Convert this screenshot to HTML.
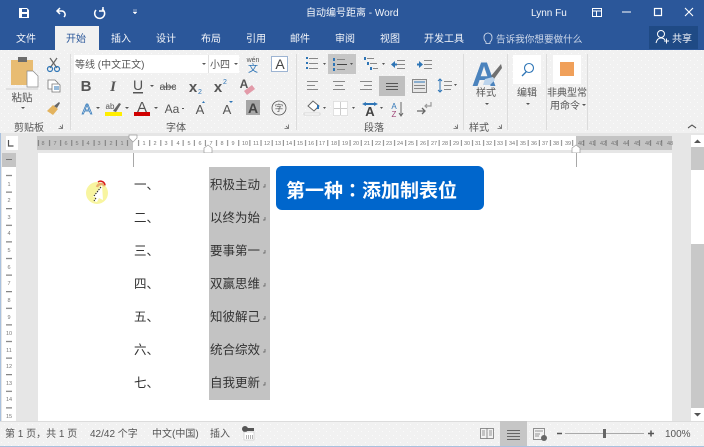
<!DOCTYPE html>
<html><head><meta charset="utf-8">
<style>
html,body{margin:0;padding:0;background:#fff;width:704px;height:447px;overflow:hidden}
svg{display:block;font-family:"Liberation Sans","Noto Sans CJK SC",sans-serif}
.t{fill:#555;font-size:10px}
.w{fill:#f4f6fa;font-size:10px}
.d{fill:#333;font-size:12.5px}
.r text{font-size:5.5px;fill:#777;text-anchor:middle}
.ar{fill:#555}
</style></head><body>
<svg width="704" height="447" viewBox="0 0 704 447" xmlns="http://www.w3.org/2000/svg">
<defs>
<pattern id="dots" width="7" height="7" patternUnits="userSpaceOnUse"><rect x="1" y="1" width="1" height="1" fill="#fbfbfb"/><rect x="4" y="4" width="1" height="1" fill="#fbfbfb"/></pattern>
<pattern id="tk" x="0" width="11.13" height="14" patternUnits="userSpaceOnUse" patternTransform="translate(133 136)"><rect x="5.200" y="4" width=".8" height="6" fill="#666"/></pattern>
<pattern id="tv" width="14" height="16.6" patternUnits="userSpaceOnUse" patternTransform="translate(2 167)"><rect x="4" y="8" width="6" height="1" fill="#666"/></pattern>
</defs>
<!-- base -->
<rect width="704" height="447" fill="#e6e6e6"/>
<rect width="704" height="50" fill="#2b579a"/>
<rect y="50" width="704" height="83" fill="#f1f1f1"/>
<rect y="50" width="704" height="83" fill="url(#dots)"/>
<rect x="55" y="26" width="44" height="24" fill="#f1f1f1"/>
<rect x="0" y="133" width="1" height="314" fill="#a9c1de"/>
<!-- title bar icons -->
<path d="M19 8h8l2 2v8H19zM22 9v3h5V9zM22 14v3h5v-3z" fill="#fff" fill-rule="evenodd"/>
<g fill="none" stroke="#fff" stroke-width="1.500"><path d="M60 8l-3 3 3 3M57 11h5a3.500 3.500 0 0 1 2 6"/><path d="M102 9a5 5 0 1 1-6 1M103 7v4h-4"/></g>
<path d="M133 10h4M133 12h4l-2 2z" stroke="#fff" stroke-width=".5" fill="#fff"/>
<text x="306" y="16" class="w">自动编号距离 - Word</text>
<text x="531" y="16" class="w">Lynn Fu</text>
<g fill="none" stroke="#fff"><rect x="592.500" y="8.500" width="9" height="8"/><path d="M592 11h10M596.500 11v5"/><path d="M622 12h9"/><rect x="654.500" y="8.500" width="7" height="7" stroke-width="1.200"/><path d="M685 8l8 8M693 8l-8 8" stroke-width="1.100"/></g>
<!-- tabs -->
<g text-anchor="middle">
<text x="26" y="42" class="w">文件</text>
<text x="76" y="42" style="fill:#2b579a;font-size:10px">开始</text>
<text x="121" y="42" class="w">插入</text>
<text x="166" y="42" class="w">设计</text>
<text x="211" y="42" class="w">布局</text>
<text x="256" y="42" class="w">引用</text>
<text x="300" y="42" class="w">邮件</text>
<text x="345" y="42" class="w">审阅</text>
<text x="390" y="42" class="w">视图</text>
<text x="444" y="42" class="w">开发工具</text>
</g>
<path d="M486 42c-2-2-2-3-2-5a4 4 0 0 1 8 0c0 2 0 3-2 5v1.500h-4z" fill="none" stroke="#dfe6f2" stroke-width=".8"/>
<text x="496" y="42.500" style="fill:#cfd9ea;font-size:9.600px">告诉我你想要做什么</text>
<rect x="649" y="26" width="49" height="23" fill="#1f4a85"/>
<circle cx="661" cy="34" r="3.500" fill="none" stroke="#fff"/><path d="M656 43c1-4 3-5 5-5s3 .5 4 2M664 41h5M666.500 38.500v5" fill="none" stroke="#fff"/>
<text x="672" y="42" class="w">共享</text>
<!-- clipboard -->
<rect x="11" y="60" width="22" height="25" fill="#e8bc72"/>
<rect x="18" y="57" width="9" height="5" fill="#6c6c6c"/>
<path d="M27 71h6l5 5v11H27z" fill="#fff" stroke="#888" stroke-width=".7"/>
<path d="M6 89h32" stroke="#cfcfcf"/>
<text x="22" y="101" class="t" text-anchor="middle" style="font-size:10.500px">粘贴</text>
<path d="M21 107h4l-2 2z" class="ar"/>
<text x="29" y="131" class="t" text-anchor="middle">剪贴板</text>
<g fill="none" stroke="#666" stroke-width=".8"><path d="M58.500 128.500h4v-4M60 126l2 2"/><path d="M284.500 128.500h4v-4M286 126l2 2"/><path d="M453.500 128.500h4v-4M455 126l2 2"/><path d="M497.500 128.500h4v-4M499 126l2 2"/></g>
<!-- cut/copy/brush -->
<g fill="none" stroke-width="1.200"><path d="M50 58l7 10M57 58l-7 10" stroke="#666"/><circle cx="50" cy="69" r="2.500" stroke="#2e75b6"/><circle cx="57" cy="69" r="2.500" stroke="#2e75b6"/></g>
<g fill="#fff" stroke="#777" stroke-width=".8"><path d="M48 80h7l3 3v6h-10z"/><path d="M52 84h7l1 1v7h-8z"/></g><path d="M54 87h5M54 89h5" stroke="#2e75b6"/>
<path d="M47 111l6-6 5 4-5 6z" fill="#e3b35e"/><path d="M54 106l5-4 1 1-3 5z" fill="#666"/>
<g stroke="#dcdcdc"><path d="M70.500 54v76M296.500 54v76M463.500 54v76"/><path d="M507.500 54v76M546.500 54v76M587.500 54v76"/></g>
<!-- font box -->
<rect x="74" y="55" width="165" height="18" fill="#fff"/><path d="M208.500 55v18" stroke="#e0e0e0"/>
<text x="75" y="68" class="t">等线 (中文正文)</text>
<text x="210" y="68" class="t">小四</text>
<path d="M202 63h4l-2 2zM234 63h4l-2 2z" class="ar"/>
<text x="253" y="62" text-anchor="middle" style="font-size:7px;fill:#555">wén</text>
<text x="253" y="72" text-anchor="middle" style="font-size:10px;fill:#2e75b6">文</text>
<rect x="271.500" y="56.500" width="16" height="15" fill="#fff" stroke="#9db4d2"/>
<text x="280" y="69" text-anchor="middle" style="font-size:14px;fill:#444">A</text>
<!-- font row 2 -->
<g fill="#555">
<text x="86" y="91" text-anchor="middle" style="font-size:15px;font-weight:bold">B</text>
<text x="113" y="91" text-anchor="middle" style="font-size:15px;font-style:italic;font-weight:bold;font-family:'Liberation Serif',serif">I</text>
<text x="138" y="90" text-anchor="middle" style="font-size:14px">U</text>
<rect x="133" y="92" width="10" height="1.500"/>
<path d="M150 85h4l-2 2z"/>
<text x="168" y="90" text-anchor="middle" style="font-size:10.500px">abc</text><rect x="160" y="86.500" width="16" height="1"/>
<text x="193" y="92" text-anchor="middle" style="font-size:15px;font-weight:bold">x</text><text x="200" y="94" style="font-size:7px;fill:#2e75b6" text-anchor="middle">2</text>
<text x="218" y="92" text-anchor="middle" style="font-size:15px;font-weight:bold">x</text><text x="225" y="84" style="font-size:7px;fill:#2e75b6" text-anchor="middle">2</text>
<text x="244" y="88" text-anchor="middle" style="font-size:12px;font-weight:bold">A</text>
</g>
<path d="M244 91l8-6 3 4-8 6z" fill="#e29aa8"/>
<!-- font row 3 -->
<text x="87" y="114" text-anchor="middle" style="font-size:15px;fill:#dbe8f6;stroke:#2e75b6;stroke-width:.7">A</text>
<path d="M96 107h4l-2 2zM125 107h4l-2 2zM154 107h4l-2 2z" class="ar"/>
<text x="110" y="109" text-anchor="middle" style="font-size:8px;fill:#555">ab</text>
<path d="M113 111l6-8 2 1-5 8z" fill="#666"/>
<rect x="105" y="112" width="17" height="4" fill="#ffee00"/>
<text x="142" y="112" text-anchor="middle" style="font-size:15px;fill:#555">A</text>
<rect x="134" y="112" width="16" height="4" fill="#d00000"/>
<text x="172" y="113" text-anchor="middle" style="font-size:12px;fill:#555">Aa</text><path d="M182 108h2v1h-2z" class="ar"/>
<text x="200" y="114" text-anchor="middle" style="font-size:13px;fill:#555">A</text><path d="M202 103h3l-1.500-2z" fill="#2e75b6"/>
<text x="227" y="114" text-anchor="middle" style="font-size:13px;fill:#555">A</text><path d="M229 101h4l-2 2z" fill="#2e75b6"/>
<rect x="246" y="100" width="14" height="15" fill="#a6a6a6"/>
<text x="253" y="113" text-anchor="middle" style="font-size:14px;fill:#444;font-weight:bold">A</text>
<circle cx="279" cy="108" r="7" fill="none" stroke="#555" stroke-width=".8"/>
<text x="279" y="111" text-anchor="middle" style="font-size:8.500px;fill:#555">字</text>
<text x="176" y="131" text-anchor="middle" class="t">字体</text>
<!-- paragraph -->
<rect x="328" y="54" width="28" height="20" fill="#c6c6c6"/>
<g stroke="#888" fill="none">
<path d="M309 58.500h9M309 63.500h9M309 68.500h9"/>
<path d="M337 64.500h10" stroke="#444"/><path d="M337 59.500h8M337 69.500h8"/>
<path d="M367 58.500h7M370 63.500h7M373 68.500h5"/>
<path d="M397 60.500h8M397 64.500h8M397 68.500h8"/>
<path d="M424 60.500h8M424 64.500h8M424 68.500h8"/>
<path d="M307 81.500h11M307 85.500h8M307 89.500h11"/><path d="M333 81.500h12M335 85.500h8M333 89.500h12"/><path d="M360 81.500h12M364 85.500h8M360 89.500h12"/>
</g>
<g fill="#2e75b6"><rect x="306" y="57" width="2" height="2"/><rect x="306" y="62" width="2" height="2"/><rect x="306" y="67" width="2" height="2"/><rect x="333" y="58" width="2" height="3"/><rect x="333" y="63" width="2" height="3"/><rect x="333" y="68" width="2" height="3"/><rect x="364" y="57" width="2" height="3"/><rect x="367" y="62" width="2" height="3"/><rect x="370" y="67" width="2" height="3"/>
<path d="M391 64.500l4-3.500v2.500h2v2h-2v2.500z"/><path d="M423 64.500l-4-3.500v2.500h-2v2h2v2.500z"/></g>
<path d="M382 63h3l-1.500 2z" class="ar"/>
<path d="M323 63h3l-1.500 2zM350 63h3l-1.500 2z" class="ar"/>
<rect x="379" y="76" width="26" height="20" fill="#bfbfbf"/>
<path d="M386 83.500h12M386 86.500h12M386 89.500h12" stroke="#555"/>
<rect x="412.500" y="79.500" width="14" height="13" fill="#e6e6e6" stroke="#888"/><path d="M414 85.500h11M414 88.500h11" stroke="#888"/><path d="M414 82h11" stroke="#2e75b6"/>
<path d="M440 79v13M438 81l2-2 2 2M438 90l2 2 2-2" stroke="#2e75b6" fill="none"/><path d="M444 81.500h8M444 85.500h8M444 89.500h7" stroke="#888"/><path d="M454 84h3l-1.500 2z" class="ar"/>
<path d="M308 106l5-5 6 5-5 5z" fill="#fff" stroke="#666"/><rect x="304" y="113" width="16" height="2" fill="#fff" stroke="#bbb" stroke-width=".5"/><rect x="317" y="105" width="2" height="4" fill="#2e75b6"/><path d="M323 107h3l-1.500 2z" class="ar"/>
<rect x="333.500" y="101.500" width="14" height="14" fill="#fff" stroke="#ccc" stroke-dasharray="1 1"/><path d="M340.500 102v13M334 108.500h13" stroke="#ccc"/><path d="M352 107h3l-1.500 2z" class="ar"/>
<text x="370" y="116" text-anchor="middle" style="font-size:13px;font-weight:bold;fill:#444">A</text><path d="M362 104l4-2v1h8v-1l4 2-4 2v-1h-8v1z" fill="#2e75b6"/><path d="M380 107h3l-1.500 2z" class="ar"/>
<text x="394" y="109" text-anchor="middle" style="font-size:8px;fill:#2e75b6">A</text><text x="394" y="117" text-anchor="middle" style="font-size:8px;fill:#a04a7a">Z</text><path d="M401 102v14M399 113l2 3 2-3" stroke="#666" fill="none"/>
<path d="M417 111h8M422 108l3 3-3 3" stroke="#666" fill="none" stroke-width="1.300"/><path d="M431 102v4h-6M427 104l-2 2 2 2" stroke="#999" fill="none" stroke-width="1.200"/>
<text x="374" y="131" text-anchor="middle" class="t">段落</text>
<!-- styles -->
<text x="484" y="86" text-anchor="middle" style="font-size:34px;font-weight:bold;fill:#4b83bd">A</text>
<path d="M491 76l10-12 1 4-8 11z" fill="#707070"/><path d="M485 79l8-2 2 3-5 5-7 0z" fill="#bcd4ec"/>
<text x="486" y="96" text-anchor="middle" class="t">样式</text>
<path d="M485 103h4l-2 2zM526 103h4l-2 2z" class="ar"/>
<text x="479" y="131" text-anchor="middle" class="t">样式</text>
<rect x="513" y="55" width="28" height="29" fill="#fff"/>
<circle cx="529" cy="68" r="4.500" fill="none" stroke="#2e75b6" stroke-width="1.100"/><path d="M526 72l-4 4" stroke="#2e75b6" stroke-width="1.300"/>
<text x="527" y="96" text-anchor="middle" class="t">编辑</text>
<rect x="553" y="55" width="28" height="29" fill="#fff"/>
<rect x="560" y="62" width="14" height="14" fill="#f0a05a"/>
<text x="567" y="96" text-anchor="middle" class="t">非典型常</text>
<text x="565" y="109" text-anchor="middle" class="t">用命令</text>
<path d="M582 104h4l-2 2z" class="ar"/>
<path d="M688 128l4-3 4 3" fill="none" stroke="#555" stroke-width="1.100"/>
<!-- ruler -->
<rect x="1" y="133" width="703" height="3" fill="#e6e6e6"/>
<rect x="37" y="136" width="96" height="14" fill="#c4c4c4"/>
<rect x="133" y="136" width="443" height="14" fill="#fff"/>
<rect x="576" y="136" width="96" height="14" fill="#c4c4c4"/>
<rect x="37" y="136" width="635" height="14" fill="url(#tk)"/>
<g class="r">
<text x="43" y="145">8</text><text x="55" y="145">7</text><text x="66" y="145">6</text><text x="77" y="145">5</text><text x="88" y="145">4</text><text x="99" y="145">3</text><text x="111" y="145">2</text><text x="122" y="145">1</text>
<text x="144" y="145">1</text><text x="155" y="145">2</text><text x="166" y="145">3</text><text x="178" y="145">4</text><text x="189" y="145">5</text><text x="200" y="145">6</text><text x="211" y="145">7</text><text x="222" y="145">8</text><text x="233" y="145">9</text><text x="245" y="145">10</text>
<text x="256" y="145">11</text><text x="267" y="145">12</text><text x="278" y="145">13</text><text x="289" y="145">14</text><text x="300" y="145">15</text><text x="311" y="145">16</text><text x="322" y="145">17</text><text x="334" y="145">18</text><text x="345" y="145">19</text><text x="356" y="145">20</text>
<text x="367" y="145">21</text><text x="378" y="145">22</text><text x="389" y="145">23</text><text x="400" y="145">24</text><text x="411" y="145">25</text><text x="423" y="145">26</text><text x="434" y="145">27</text><text x="445" y="145">28</text><text x="456" y="145">29</text><text x="467" y="145">30</text>
<text x="478" y="145">31</text><text x="489" y="145">32</text><text x="500" y="145">33</text><text x="512" y="145">34</text><text x="523" y="145">35</text><text x="534" y="145">36</text><text x="545" y="145">37</text><text x="556" y="145">38</text><text x="568" y="145">39</text>
<text x="581" y="145">40</text><text x="592" y="145">41</text><text x="603" y="145">42</text><text x="614" y="145">43</text><text x="626" y="145">44</text><text x="637" y="145">45</text><text x="648" y="145">46</text><text x="659" y="145">47</text><text x="670" y="145">48</text>
</g>
<path d="M129 135h8v3l-4 4-4-4z" fill="#fff" stroke="#999" stroke-width=".7"/>
<path d="M204 151v-3l4-3 4 3v5h-8z" fill="#fff" stroke="#999" stroke-width=".7"/>
<path d="M572 151v-3l4-3 4 3v5h-8z" fill="#fff" stroke="#999" stroke-width=".7"/>
<rect x="6" y="136" width="12" height="14" fill="#fff"/>
<path d="M8.500 140v6h5" fill="none" stroke="#555" stroke-width="1.200"/>
<!-- left ruler -->
<rect x="2" y="153" width="14" height="268" fill="#fff"/>
<rect x="2" y="153" width="14" height="14" fill="#c4c4c4"/>
<rect x="6" y="159" width="6" height="1" fill="#777"/>
<rect x="2" y="167" width="14" height="254" fill="url(#tv)"/>
<g style="font-size:5.500px;fill:#777" text-anchor="middle">
<text x="9" y="186">1</text><text x="9" y="202">2</text><text x="9" y="219">3</text><text x="9" y="235">4</text><text x="9" y="252">5</text><text x="9" y="269">6</text><text x="9" y="285">7</text><text x="9" y="302">8</text><text x="9" y="319">9</text><text x="9" y="335">10</text><text x="9" y="352">11</text><text x="9" y="368">12</text><text x="9" y="385">13</text><text x="9" y="401">14</text><text x="9" y="418">15</text>
</g>
<!-- page -->
<rect x="38" y="153" width="634" height="268" fill="#fff"/>
<path d="M133.500 153v14M576.500 153v14" stroke="#a8a8a8"/>
<rect x="209" y="167" width="61" height="233" fill="#c3c3c3"/>
<g>
<text x="134" y="189" class="d">一、</text><text x="210" y="189" class="d">积极主动</text>
<text x="134" y="222" class="d">二、</text><text x="210" y="222" class="d">以终为始</text>
<text x="134" y="255" class="d">三、</text><text x="210" y="255" class="d">要事第一</text>
<text x="134" y="288" class="d">四、</text><text x="210" y="288" class="d">双赢思维</text>
<text x="134" y="321" class="d">五、</text><text x="210" y="321" class="d">知彼解己</text>
<text x="134" y="354" class="d">六、</text><text x="210" y="354" class="d">统合综效</text>
<text x="134" y="387" class="d">七、</text><text x="210" y="387" class="d">自我更新</text>
</g>
<g fill="none" stroke="#555" stroke-width=".7"><path d="M265 184v3h-2"/><path d="M265 217v3h-2"/><path d="M265 250v3h-2"/><path d="M265 283v3h-2"/><path d="M265 316v3h-2"/><path d="M265 349v3h-2"/><path d="M265 382v3h-2"/></g>
<rect x="276" y="166" width="208" height="44" rx="6" fill="#0066cc"/>
<text x="286" y="197" style="font-size:19px;font-weight:bold;fill:#fff">第一种<tspan style="font-family:'Noto Sans CJK TC',sans-serif">：</tspan>添加制表位</text>
<!-- cursor -->
<circle cx="97" cy="193" r="11" fill="#f8f5a0"/>
<path d="M97 187a4.500 4.500 0 0 1 8-1" fill="none" stroke="#e8b070" stroke-width="2.500"/>
<path d="M98 182a4.500 4.500 0 0 1 7 3" fill="none" stroke="#d81818" stroke-width="1.500"/>
<path d="M102 185l-9 12 3 0-2 4 3 1 2-4 4 2z" fill="#fff"/>
<path d="M101 187l-7 9M96 198l-2 3" stroke="#222" stroke-width="1" stroke-dasharray="1.500 1" fill="none"/>
<!-- scrollbar -->
<rect x="691" y="135" width="13" height="286" fill="#c8c8c8"/>
<rect x="691" y="135" width="13" height="12" fill="#fff"/>
<path d="M694 143h7l-3.500-3.500z" fill="#555"/>
<rect x="691" y="170" width="13" height="74" fill="#fff"/>
<rect x="691" y="408" width="13" height="13" fill="#fff"/>
<path d="M694 413h7l-3.500 3.500z" fill="#555"/>
<!-- status -->
<rect y="421" width="704" height="26" fill="#f1f1f1"/>
<rect y="421" width="704" height="26" fill="url(#dots)"/>
<path d="M0 421.500h704" stroke="#dcdcdc"/>
<path d="M0 446.500h704" stroke="#a9c1de"/>
<g style="font-size:10px;fill:#555">
<text x="5" y="437">第 1 页，共 1 页</text>
<text x="90" y="437">42/42 个字</text>
<text x="152" y="437">中文(中国)</text>
<text x="210" y="437">插入</text>
</g>
<circle cx="245" cy="429" r="3" fill="#555"/><rect x="246" y="428" width="8" height="3" fill="#555"/><rect x="244" y="432" width="10" height="8" fill="#fff" stroke="#bbb" stroke-width=".5"/><path d="M246 436h7M246 438h7" stroke="#666" stroke-dasharray="1 1"/>
<g fill="none" stroke="#777" stroke-width=".8"><rect x="480.500" y="428.500" width="13" height="10"/><path d="M487 428v11M482 431h3M482 433h3M482 435h3M489 431h3M489 433h3M489 435h3"/></g>
<rect x="500" y="421" width="27" height="25" fill="#c6c6c6"/>
<path d="M507 430.500h13M507 433.500h13M507 436.500h13M507 439.500h13" stroke="#666"/>
<g fill="none" stroke="#777" stroke-width=".8"><rect x="533.500" y="428.500" width="11" height="11"/><path d="M535 431h8M535 434h5M535 436h4"/></g><circle cx="544" cy="438" r="3" fill="#666"/>
<path d="M557 433.500h5" stroke="#555" stroke-width="1.500"/>
<path d="M565 433.500h79" stroke="#aaa"/>
<rect x="603" y="429" width="3" height="9" fill="#666"/>
<path d="M648 433.500h6M651 430.500v6" stroke="#555" stroke-width="1.500"/>
<text x="665" y="437" style="font-size:10px;fill:#555">100%</text>
</svg>
</body></html>
